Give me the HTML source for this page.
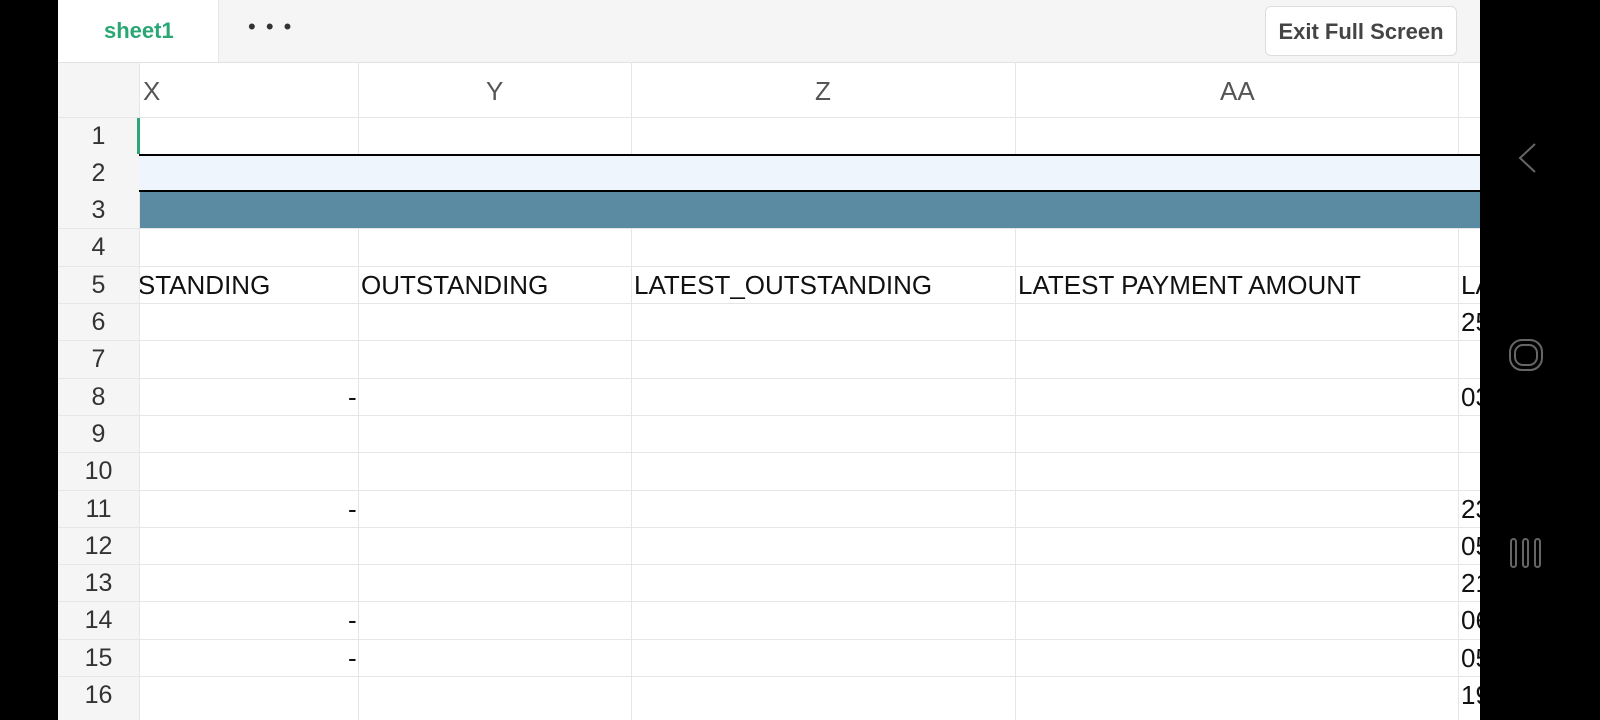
<!DOCTYPE html><html><head><style>
body{margin:0;width:1600px;height:720px;background:#000;overflow:hidden;font-family:"Liberation Sans",sans-serif;position:relative}
.a{position:absolute}
#app{left:58px;top:0;width:1422px;height:720px;background:#fff;overflow:hidden}
.hl{position:absolute;left:0;width:1422px;height:1px;background:#e6e6e6}
.vl{position:absolute;top:62px;width:1px;height:660px;background:#e6e6e6}
.rn{position:absolute;left:0;width:81px;text-align:center;font-size:25px;color:#333;line-height:37px}
.t{position:absolute;font-size:26px;color:#111;line-height:37px;white-space:nowrap}
.ch{position:absolute;top:62px;height:55px;line-height:58px;font-size:26px;color:#555}
</style></head><body>
<div id="app" class="a">
<div class="a" style="left:0;top:0;width:1422px;height:62px;background:#f5f5f5;border-bottom:1px solid #e2e2e2"></div>
<div class="a" style="left:0;top:0;width:160px;height:62px;background:#fff;border-right:1px solid #e6e6e6"></div>
<div class="a" style="left:46px;top:18px;font-size:22px;font-weight:bold;color:#2aa775">sheet1</div>
<div class="a" style="left:190px;top:14px;font-size:22px;color:#333;letter-spacing:2px">• • •</div>
<div class="a" style="left:1207px;top:6px;width:190px;height:48px;background:#fff;border:1px solid #ddd;border-radius:6px;font-size:22px;font-weight:bold;color:#444;line-height:50px;text-align:center">Exit Full Screen</div>
<div class="a" style="left:0;top:63px;width:81px;height:660px;background:#f5f5f5"></div>
<div class="vl" style="left:81px"></div><div class="vl" style="left:300px"></div><div class="vl" style="left:573px"></div><div class="vl" style="left:957px"></div><div class="vl" style="left:1400px"></div>
<div class="ch" style="left:85px">X</div><div class="ch" style="left:428px">Y</div><div class="ch" style="left:757px">Z</div><div class="ch" style="left:1162px">AA</div>
<div class="hl" style="top:117px"></div>
<div class="hl" style="top:228px"></div><div class="hl" style="top:266px"></div><div class="hl" style="top:303px"></div><div class="hl" style="top:340px"></div><div class="hl" style="top:378px"></div><div class="hl" style="top:415px"></div><div class="hl" style="top:452px"></div><div class="hl" style="top:490px"></div><div class="hl" style="top:527px"></div><div class="hl" style="top:564px"></div><div class="hl" style="top:601px"></div><div class="hl" style="top:639px"></div><div class="hl" style="top:676px"></div>
<div class="a" style="left:81px;top:154px;width:1341px;height:38px;background:#eef5fc;border-top:2px solid #000;border-bottom:2px solid #000;box-sizing:border-box"></div>
<div class="a" style="left:82px;top:192px;width:1340px;height:36px;background:#5b8aa3"></div>
<div class="a" style="left:79px;top:118px;width:3px;height:36px;background:#2aa775"></div>
<div class="rn" style="top:118px">1</div><div class="rn" style="top:155px">2</div><div class="rn" style="top:192px">3</div><div class="rn" style="top:229px">4</div><div class="rn" style="top:267px">5</div><div class="rn" style="top:304px">6</div><div class="rn" style="top:341px">7</div><div class="rn" style="top:379px">8</div><div class="rn" style="top:416px">9</div><div class="rn" style="top:453px">10</div><div class="rn" style="top:491px">11</div><div class="rn" style="top:528px">12</div><div class="rn" style="top:565px">13</div><div class="rn" style="top:602px">14</div><div class="rn" style="top:640px">15</div><div class="rn" style="top:677px">16</div>
<div class="a" style="left:82px;top:267px;width:218px;height:37px;overflow:hidden"><div class="t" style="left:-57px;top:0">OUTSTANDING</div></div>
<div class="t" style="left:303px;top:267px">OUTSTANDING</div>
<div class="t" style="left:576px;top:267px">LATEST_OUTSTANDING</div>
<div class="t" style="left:960px;top:267px">LATEST PAYMENT AMOUNT</div>
<div class="t" style="left:1403px;top:267px">LA</div><div class="t" style="left:1403px;top:304px">25</div><div class="t" style="left:1403px;top:379px">03</div><div class="t" style="left:1403px;top:491px">23</div><div class="t" style="left:1403px;top:528px">05</div><div class="t" style="left:1403px;top:565px">21</div><div class="t" style="left:1403px;top:602px">06</div><div class="t" style="left:1403px;top:640px">05</div><div class="t" style="left:1403px;top:677px">19</div>
<div class="t" style="left:290px;top:379px">-</div><div class="t" style="left:290px;top:491px">-</div><div class="t" style="left:290px;top:602px">-</div><div class="t" style="left:290px;top:640px">-</div>
</div>
<svg class="a" style="left:1480px;top:0" width="120" height="720" fill="none" stroke="#666" stroke-width="2">
<path d="M55 144 L40 158 L55 172"/>
<rect x="30" y="340" width="32" height="30" rx="12"/><rect x="35" y="345" width="22" height="20" rx="8"/>
<rect x="31" y="539" width="5" height="28" rx="2.5"/><rect x="43" y="539" width="5" height="28" rx="2.5"/><rect x="55" y="539" width="5" height="28" rx="2.5"/>
</svg>
</body></html>
